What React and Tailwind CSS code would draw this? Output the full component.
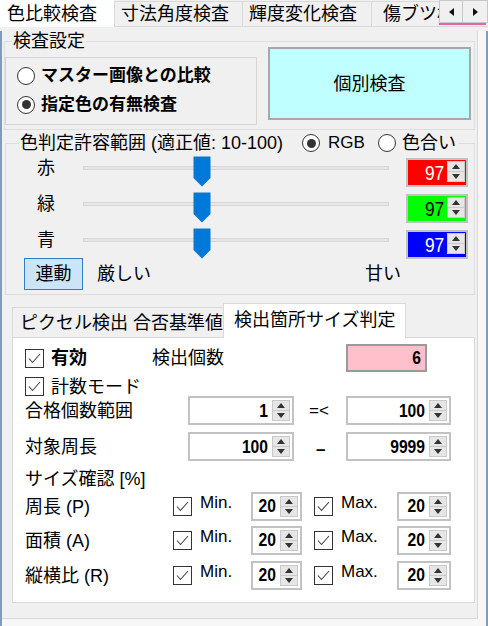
import React from 'react';

const JP = "font-['Liberation_Sans','Noto_Sans_CJK_JP',sans-serif]";
const NUM = "font-['Liberation_Sans_Narrow','Liberation_Sans',sans-serif] inline-block origin-right scale-x-[0.87]";

function Up() {
  return (
    <svg width="8" height="5" viewBox="0 0 8 5">
      <path d="M4 0 L8 5 H0 Z" fill="#333" />
    </svg>
  );
}

function Down() {
  return (
    <svg width="8" height="5" viewBox="0 0 8 5">
      <path d="M0 0 H8 L4 5 Z" fill="#333" />
    </svg>
  );
}

function Spinner({ className = 'my-[2px] mr-[2px]' }) {
  return (
    <div className={`flex w-[18px] flex-col border border-[#c9c9c9] bg-[#e6e6e6] ${className}`}>
      <div className="flex flex-1 items-center justify-center border-b border-[#c9c9c9]">
        <Up />
      </div>
      <div className="flex flex-1 items-center justify-center">
        <Down />
      </div>
    </div>
  );
}

function NumBox({ value, className = '' }) {
  return (
    <div className={`flex h-[29px] border-2 border-[#c2c2c2] bg-white ${className}`}>
      <span className="flex flex-1 items-center justify-end pr-[4px]">
        <span className={`text-[18px] font-bold ${NUM}`}>{value}</span>
      </span>
      <Spinner />
    </div>
  );
}

function ColorBox({ value, bg, text }) {
  return (
    <div className={`flex h-[29px] w-[62px] border-2 border-[#c2c2c2] ${bg}`}>
      <span className="flex flex-1 items-center justify-end pr-[3px]">
        <span className={`text-[20px] ${NUM} ${text}`}>{value}</span>
      </span>
      <Spinner className="mt-[1px] mb-[3px] mr-[1px]" />
    </div>
  );
}

function Radio({ checked }) {
  return (
    <span className="flex h-[18px] w-[18px] shrink-0 items-center justify-center rounded-full border border-[#333] bg-white">
      {checked && <span className="h-[9px] w-[9px] rounded-full bg-[#333]" />}
    </span>
  );
}

function Check() {
  return (
    <svg width="19" height="19" viewBox="0 0 19 19" className="shrink-0">
      <rect x="0.5" y="0.5" width="18" height="18" fill="#fff" stroke="#333" />
      <path d="M4 9.5 L7.5 13.5 L15 5" fill="none" stroke="#444" strokeWidth="1.1" />
    </svg>
  );
}

function Thumb() {
  return (
    <svg width="18" height="31" viewBox="0 0 18 31">
      <path d="M0.5 0.5 H17.5 V22 L9 30.5 L0.5 22 Z" fill="#0078d7" />
    </svg>
  );
}

function SliderRow({ label, bg, text }) {
  return (
    <div className="flex h-[36px] items-center">
      <span className="w-[77px] pl-[31px] text-[18px] leading-[20px]">{label}</span>
      <div className="relative h-[4px] w-[306px] border border-[#d6d6d6] bg-[#e7e7e7]">
        <div className="absolute left-[109px] top-[-11px]">
          <Thumb />
        </div>
      </div>
      <div className="ml-[17px] mt-[9px]">
        <ColorBox value="97" bg={bg} text={text} />
      </div>
    </div>
  );
}

function SizeRow({ label, className }) {
  return (
    <div className={`flex h-[29px] items-center ${className}`}>
      <span className="w-[148px] text-[18px] leading-[20px]">{label}</span>
      <Check />
      <span className="ml-[8px] w-[51px] self-start pt-[2px] text-[17px] leading-[18px]">Min.</span>
      <NumBox value="20" className="w-[51px]" />
      <div className="ml-[12px]">
        <Check />
      </div>
      <span className="ml-[8px] w-[56px] self-start pt-[2px] text-[17px] leading-[18px]">Max.</span>
      <NumBox value="20" className="w-[54px]" />
    </div>
  );
}

export default function App() {
  return (
    <div className={`h-[626px] w-[488px] overflow-hidden bg-[#f0f0f0] text-black ${JP}`}>
      {/* main tab strip */}
      <div className="flex h-[27px] items-end text-[18px] leading-[20px]">
        <div className="flex h-[27px] w-[114px] items-center bg-white pl-[7px]">色比較検査</div>
        <div className="flex h-[26px] w-[128px] items-center border-l border-t border-b border-[#d9d9d9] pl-[6px]">
          寸法角度検査
        </div>
        <div className="flex h-[26px] w-[129px] items-center border-l border-t border-b border-[#d9d9d9] pl-[6px]">
          輝度変化検査
        </div>
        <div className="flex h-[26px] w-[68px] items-center overflow-hidden whitespace-nowrap border-l border-t border-b border-[#d9d9d9] pl-[11px]">
          傷ブツ検
        </div>
        <div className="flex h-[27px] w-[49px] flex-col self-start">
          <div className="flex h-[23px]">
            <div className="flex w-[24px] items-center justify-center border border-[#c8c8c8] bg-[#f0f0f0]">
              <svg width="5" height="8" viewBox="0 0 5 8">
                <path d="M5 0 V8 L0 4 Z" fill="#111" />
              </svg>
            </div>
            <div className="flex w-[25px] items-center justify-center border border-l-0 border-[#c8c8c8] bg-[#f0f0f0]">
              <svg width="5" height="8" viewBox="0 0 5 8">
                <path d="M0 0 V8 L5 4 Z" fill="#111" />
              </svg>
            </div>
          </div>
          <div className="h-[2px] w-[47px] bg-[#e066a6]" />
          <div className="h-[2px] border-b border-[#d9d9d9]" />
        </div>
      </div>

      {/* window frame */}
      <div className="h-[599px] border-x-2 border-b-2 border-[#7f9db9] bg-[#f7f7f7]">
        <div className="h-[588px] w-[476px] border-r border-b border-[#d9d9d9] bg-[#f0f0f0]">
          {/* 検査設定 */}
          <fieldset className="ml-[2px] mt-[4px] w-[471px] border border-[#dedede] pb-[4px]">
            <legend className="ml-[7px] px-[1px] text-[18px] leading-[20px]">検査設定</legend>
            <div className="flex items-start">
              <div className="mt-[6px] h-[68px] w-[252px] border border-[#d5d5d5] pl-[11px] pt-[3px]">
                <div className="flex h-[29px] items-center gap-[6px] text-[17px] font-bold leading-[20px]">
                  <Radio />
                  マスター画像との比較
                </div>
                <div className="flex h-[29px] items-center gap-[6px] text-[17px] font-bold leading-[20px]">
                  <Radio checked />
                  指定色の有無検査
                </div>
              </div>
              <button
                className="-mt-[4px] ml-[11px] flex h-[73px] w-[203px] items-center justify-center border-2 border-[#a8a8a8] bg-[#c0ffff] text-[18px] leading-[20px]"
                type="button"
              >
                個別検査
              </button>
            </div>
          </fieldset>

          {/* 色判定許容範囲 */}
          <fieldset className="ml-[3px] mt-[4px] w-[470px] border border-[#dcdcdc] pb-[4px]">
            <legend className="ml-[13px] px-[1px]">
              <div className="flex h-[18px] items-center text-[18px] leading-[18px]">
                <span className="w-[282px] whitespace-nowrap">色判定許容範囲 (適正値: 10-100)</span>
                <Radio checked />
                <span className="ml-[8px] w-[50px] text-[17px]">RGB</span>
                <Radio />
                <span className="ml-[6px] pr-[2px]">色合い</span>
              </div>
            </legend>
            <div className="-mt-[2px]">
              <SliderRow label="赤" bg="bg-[#ff0000]" text="text-white" />
              <SliderRow label="緑" bg="bg-[#00ff00]" text="text-black" />
              <SliderRow label="青" bg="bg-[#0000ff]" text="text-white" />
              <div className="flex h-[32px] items-center text-[18px] leading-[20px]">
                <button
                  className="ml-[18px] flex h-[32px] w-[59px] items-center justify-center border-[1.5px] border-[#2f7fc8] bg-[#cce4f7]"
                  type="button"
                >
                  連動
                </button>
                <span className="ml-[14px]">厳しい</span>
                <span className="flex-1" />
                <span className="mr-[73px]">甘い</span>
              </div>
            </div>
          </fieldset>

          {/* inner tab control */}
          <div className="ml-[10px] mt-[8px] w-[463px]">
            <div className="flex h-[34px] items-end text-[18px] leading-[20px]">
              <div className="flex h-[30px] w-[211px] items-center border-l border-t border-[#d9d9d9] pl-[7px] whitespace-nowrap">
                ピクセル検出 合否基準値
              </div>
              <div className="relative z-10 -mb-[1px] flex h-[35px] w-[183px] items-center border-x border-t border-[#d9d9d9] bg-white pb-[2px] pl-[10px] whitespace-nowrap">
                検出箇所サイズ判定
              </div>
            </div>
            <div className="h-[266px] border border-[#d9d9d9] bg-white pl-[12px]">
              <div className="mt-[6px] flex h-[28px] items-center text-[18px] leading-[20px]">
                <div className="flex w-[127px] items-center">
                  <Check />
                  <span className="ml-[7px] font-bold">有効</span>
                </div>
                <span className="w-[194px]">検出個数</span>
                <div className="flex h-[28px] w-[81px] items-center justify-end border-2 border-[#9a9a9a] bg-[#ffc0cb] pr-[4px]">
                  <span className={`text-[18px] font-bold ${NUM}`}>6</span>
                </div>
              </div>
              <div className="mt-[5px] flex h-[19px] items-center text-[18px] leading-[20px]">
                <Check />
                <span className="ml-[7px]">計数モード</span>
              </div>
              <div className="flex h-[29px] items-center text-[18px] leading-[20px]">
                <span className="w-[163px]">合格個数範囲</span>
                <NumBox value="1" className="w-[106px]" />
                <span className="w-[52px] pl-[15px] text-[17px]">=&lt;</span>
                <NumBox value="100" className="w-[105px]" />
              </div>
              <div className="mt-[7px] flex h-[29px] items-center text-[18px] leading-[20px]">
                <span className="w-[163px]">対象周長</span>
                <NumBox value="100" className="w-[106px]" />
                <span className="w-[52px] pl-[22px] pt-[6px] text-[17px] font-bold">–</span>
                <NumBox value="9999" className="w-[105px]" />
              </div>
              <div className="mt-[8px] flex h-[20px] items-center text-[18px] leading-[20px]">サイズ確認 [%]</div>
              <SizeRow label="周長 (P)" className="mt-[3px]" />
              <SizeRow label="面積 (A)" className="mt-[5px]" />
              <SizeRow label="縦横比 (R)" className="mt-[6px]" />
            </div>
          </div>
        </div>
      </div>
    </div>
  );
}
